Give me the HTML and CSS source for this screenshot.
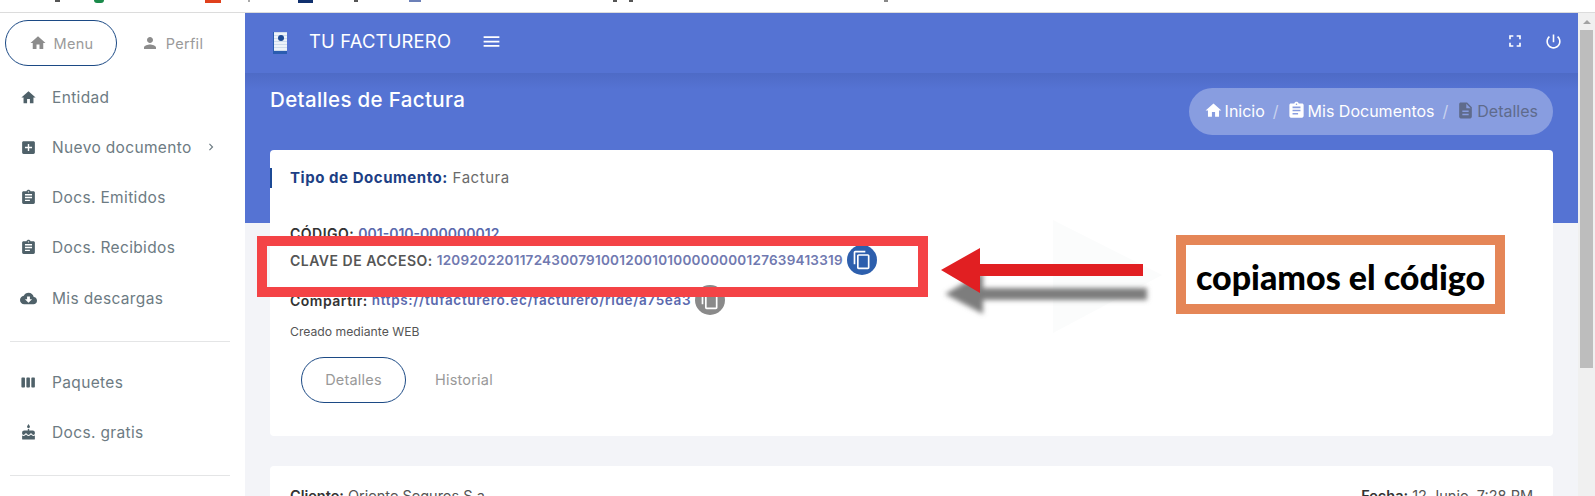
FILE: index.html
```html
<!DOCTYPE html>
<html lang="es">
<head>
  <meta charset="UTF-8">
  <title>Tu Facturero - Detalles de Factura</title>
  <meta name="viewport" content="width=device-width, initial-scale=1.0">
  <link rel="stylesheet" href="styles.css">
</head>
<body>

  <!-- iconos -->
  <svg class="sprite" aria-hidden="true">
    <symbol id="i-home" viewBox="0 0 24 24"><path d="M10 20v-6h4v6h5v-8h3L12 3 2 12h3v8z"/></symbol>
    <symbol id="i-person" viewBox="0 0 24 24"><path d="M12 12c2.21 0 4-1.79 4-4s-1.79-4-4-4-4 1.79-4 4 1.79 4 4 4zm0 2c-2.67 0-8 1.34-8 4v2h16v-2c0-2.66-5.33-4-8-4z"/></symbol>
    <symbol id="i-add" viewBox="0 0 24 24"><path d="M19 3H5c-1.11 0-2 .9-2 2v14c0 1.1.89 2 2 2h14c1.1 0 2-.9 2-2V5c0-1.1-.9-2-2-2zm-2 10h-4v4h-2v-4H7v-2h4V7h2v4h4v2z"/></symbol>
    <symbol id="i-clip" viewBox="0 0 24 24"><path d="M19 3h-4.18C14.4 1.84 13.3 1 12 1c-1.3 0-2.4.84-2.82 2H5c-1.1 0-2 .9-2 2v14c0 1.1.9 2 2 2h14c1.1 0 2-.9 2-2V5c0-1.1-.9-2-2-2zm-7 0c.55 0 1 .45 1 1s-.45 1-1 1-1-.45-1-1 .45-1 1-1zm2 14H7v-2h7v2zm3-4H7v-2h10v2zm0-4H7V7h10v2z"/></symbol>
    <symbol id="i-cloud" viewBox="0 0 24 24"><path d="M19.35 10.04C18.67 6.59 15.64 4 12 4 9.11 4 6.6 5.64 5.35 8.04 2.34 8.36 0 10.91 0 14c0 3.31 2.69 6 6 6h13c2.76 0 5-2.24 5-5 0-2.64-2.05-4.78-4.65-4.96zM17 13l-5 5-5-5h3V9h4v4h3z"/></symbol>
    <symbol id="i-week" viewBox="0 0 24 24"><path d="M6 5H3c-.55 0-1 .45-1 1v12c0 .55.45 1 1 1h3c.55 0 1-.45 1-1V6c0-.55-.45-1-1-1zm14 0h-3c-.55 0-1 .45-1 1v12c0 .55.45 1 1 1h3c.55 0 1-.45 1-1V6c0-.55-.45-1-1-1zm-7 0h-3c-.55 0-1 .45-1 1v12c0 .55.45 1 1 1h3c.55 0 1-.45 1-1V6c0-.55-.45-1-1-1z"/></symbol>
    <symbol id="i-cake" viewBox="0 0 24 24"><path d="M12 6c1.11 0 2-.9 2-2 0-.38-.1-.73-.29-1.03L12 0l-1.71 2.97c-.19.3-.29.65-.29 1.03 0 1.1.9 2 2 2zm4.6 9.99l-1.07-1.07-1.08 1.07c-1.3 1.3-3.58 1.31-4.89 0l-1.07-1.07-1.09 1.07C6.75 16.64 5.88 17 4.96 17c-.73 0-1.4-.23-1.96-.61V21c0 .55.45 1 1 1h16c.55 0 1-.45 1-1v-4.61c-.56.38-1.23.61-1.96.61-.92 0-1.79-.36-2.44-1.01zM18 9h-5V7h-2v2H6c-1.66 0-3 1.34-3 3v1.54c0 1.08.88 1.96 1.96 1.96.52 0 1.02-.2 1.38-.57l2.14-2.13 2.13 2.13c.74.74 2.03.74 2.77 0l2.14-2.13 2.13 2.13c.37.37.86.57 1.38.57 1.08 0 1.96-.88 1.96-1.96V12C21 10.34 19.66 9 18 9z"/></symbol>
    <symbol id="i-doc" viewBox="0 0 24 24"><path d="M14 2H6c-1.1 0-1.99.9-1.99 2L4 20c0 1.1.89 2 1.99 2H18c1.1 0 2-.9 2-2V8l-6-6zm2 16H8v-2h8v2zm0-4H8v-2h8v2zm-3-5V3.5L18.5 9H13z"/></symbol>
    <symbol id="i-full" viewBox="0 0 24 24"><path d="M7 14H5v5h5v-2H7v-3zm-2-4h2V7h3V5H5v5zm12 7h-3v2h5v-5h-2v3zM14 5v2h3v3h2V5h-5z"/></symbol>
    <symbol id="i-power" viewBox="0 0 24 24"><path d="M13 3h-2v10h2V3zm4.83 2.17l-1.42 1.42C17.99 7.86 19 9.81 19 12c0 3.87-3.13 7-7 7s-7-3.13-7-7c0-2.19 1.01-4.14 2.58-5.42L6.17 5.17C4.23 6.82 3 9.26 3 12c0 4.97 4.03 9 9 9s9-4.03 9-9c0-2.74-1.23-5.18-3.17-6.83z"/></symbol>
    <symbol id="i-copy" viewBox="0 0 24 24"><path d="M16 1H4c-1.1 0-2 .9-2 2v14h2V3h12V1zm3 4H8c-1.1 0-2 .9-2 2v14c0 1.1.9 2 2 2h11c1.1 0 2-.9 2-2V7c0-1.1-.9-2-2-2zm0 16H8V7h11v14z"/></symbol>
    <symbol id="i-menu" viewBox="0 0 24 24"><path d="M3 18h18v-2H3v2zm0-5h18v-2H3v2zm0-7v2h18V6H3z"/></symbol>
    <symbol id="i-chev" viewBox="0 0 24 24"><path d="M10 6 8.59 7.41 13.17 12l-4.58 4.59L10 18l6-6z"/></symbol>
  </svg>

  <!-- restos de la barra de marcadores, cortada -->
  <div class="bookmarks">
    <i class="mark m1"></i><i class="mark m2"></i><i class="mark m3"></i><i class="mark m4"></i>
    <i class="mark m5"></i><i class="mark m6"></i><i class="mark m7"></i><i class="mark m8"></i>
    <i class="mark m9"></i><i class="mark m10"></i>
  </div>

  <div class="app">
    <!-- ---------- Menu lateral ---------- -->
    <aside class="sidebar">
      <div class="side-tabs">
        <a class="side-tab active"><svg class="icon"><use href="#i-home"/></svg>Menu</a>
        <a class="side-tab"><svg class="icon"><use href="#i-person"/></svg>Perfil</a>
      </div>
      <nav class="side-nav">
        <a class="side-item"><svg class="icon"><use href="#i-home"/></svg>Entidad</a>
        <a class="side-item"><svg class="icon"><use href="#i-add"/></svg>Nuevo documento<svg class="chev"><use href="#i-chev"/></svg></a>
        <a class="side-item"><svg class="icon"><use href="#i-clip"/></svg>Docs. Emitidos</a>
        <a class="side-item"><svg class="icon"><use href="#i-clip"/></svg>Docs. Recibidos</a>
        <a class="side-item"><svg class="icon"><use href="#i-cloud"/></svg>Mis descargas</a>
        <hr class="side-line">
        <a class="side-item"><svg class="icon"><use href="#i-week"/></svg>Paquetes</a>
        <a class="side-item"><svg class="icon"><use href="#i-cake"/></svg>Docs. gratis</a>
        <hr class="side-line">
      </nav>
    </aside>

    <div class="main">
      <header class="topbar">
        <div class="logo"><span class="logo-dot"></span></div>
        <span class="brand">TU FACTURERO</span>
        <svg class="icon bar-burger"><use href="#i-menu"/></svg>
        <svg class="icon bar-full"><use href="#i-full"/></svg>
        <svg class="icon bar-power"><use href="#i-power"/></svg>
      </header>

      <div class="content">
        <div class="page-head">
          <h1>Detalles de Factura</h1>
          <div class="crumbs">
            <a><svg class="icon"><use href="#i-home"/></svg>Inicio</a>
            <span class="sep">/</span>
            <a><svg class="icon"><use href="#i-clip"/></svg>Mis Documentos</a>
            <span class="sep">/</span>
            <a class="current"><svg class="icon"><use href="#i-doc"/></svg>Detalles</a>
          </div>
        </div>

        <section class="card">
          <div class="card-title"><b>Tipo de Documento:</b> Factura</div>
          <div class="row row-code"><b>CÓDIGO:</b> <a>001-010-000000012</a></div>
          <div class="row row-key">
            <b>CLAVE DE ACCESO:</b> <a>1209202201172430079100120010100000000127639413319</a>
            <span class="copy-btn"><svg class="icon"><use href="#i-copy"/></svg></span>
          </div>
          <div class="row row-share">
            <b>Compartir:</b> <a>https://tufacturero.ec/facturero/ride/a75ea3</a>
            <span class="copy-btn grey"><svg class="icon"><use href="#i-copy"/></svg></span>
          </div>
          <div class="created">Creado mediante WEB</div>
          <div class="tabs">
            <a class="tab active">Detalles</a>
            <a class="tab">Historial</a>
          </div>
        </section>

        <section class="card second">
          <span><b>Cliente:</b> Oriente Seguros S.a.</span>
          <span><b>Fecha:</b> 12 Junio, 7:28 PM</span>
        </section>
      </div>
    </div>

    <div class="scrollbar">
      <span class="scroll-up"></span>
      <span class="scroll-thumb"></span>
    </div>
  </div>

  <!-- anotaciones puestas encima de la captura -->
  <div class="note-box"></div>
  <svg class="note-arrow" viewBox="0 0 240 120">
    <defs><filter id="blur" x="-10%" y="-40%" width="120%" height="180%"><feGaussianBlur stdDeviation="2.6"/></filter></defs>
    <polygon class="ghost" points="123,5 232,60 123,118"/>
    <polygon class="arrow-shadow" points="15,79 53,57 53,73 217,73 217,85 53,85 53,99" filter="url(#blur)"/>
    <polygon class="arrow-red" points="11,55 50,33 50,49 213,49 213,61 50,61 50,78"/>
  </svg>
  <div class="note-label">copiamos el código</div>

</body>
</html>
```

FILE: styles.css
```css
* { box-sizing: border-box; }

html, body {
  margin: 0;
  height: 496px;
  overflow: hidden;
}
body {
  position: relative;
  background: #fff;
  font-family: Inter, "Open Sans", sans-serif;
  color: #5f6368;
}
a { text-decoration: none; }
.sprite { display: none; }
.icon { fill: currentColor; flex: none; }

/* ---------- Barra de marcadores ---------- */
.bookmarks {
  display: flex;
  height: 13px;
  border-bottom: 1px solid #dcdcdc;
}
.mark { display: block; height: 2px; flex: none; background: #555; width: 5px; }
.m1 { margin-left: 55px; }
.m2 { margin-left: 34px; width: 10px; height: 3px; background: #1a8a4a; border-radius: 0 0 5px 5px; }
.m3 { margin-left: 101px; width: 16px; height: 3px; background: #e0401c; }
.m4 { margin-left: 27px; width: 2px; background: #aaa; }
.m5 { margin-left: 48px; width: 15px; height: 3px; background: #10306e; }
.m6 { margin-left: 41px; width: 4px; }
.m7 { margin-left: 51px; width: 12px; background: #6c80b8; }
.m8 { margin-left: 192px; width: 4px; }
.m9 { margin-left: 12px; width: 4px; }
.m10 { margin-left: 251px; width: 4px; background: #888; }

.app {
  display: flex;
  height: 483px;
}

/* ---------- Menu lateral ---------- */
.sidebar {
  width: 245px;
  flex: none;
  background: #fff;
}
.side-tabs {
  display: flex;
  align-items: center;
  padding: 7px 0 0 5px;
}
.side-tab {
  display: flex;
  align-items: center;
  justify-content: center;
  gap: 7px;
  width: 112px;
  height: 46px;
  font-size: 14.5px;
  letter-spacing: .3px;
  color: #9a9a9a;
  border-radius: 23px;
}
.side-tab .icon { width: 18px; height: 18px; color: #8c8c8c; }
.side-tab.active {
  border: 1px solid #1c4a85;
}
.side-tab + .side-tab { margin-left: 4px; width: 102px; }

.side-nav { margin-top: 6px; }
.side-item {
  display: flex;
  align-items: center;
  height: 50.25px;
  padding-left: 20px;
  font-size: 15.5px;
  letter-spacing: .35px;
  color: #6d7b83;
}
.side-item .icon {
  width: 17px;
  height: 17px;
  margin-right: 15px;
  color: #4f6169;
}
.chev { width: 14px; height: 14px; margin-left: 12px; fill: #6d7b83; }
.side-line {
  margin: 18px 15px 15px 10px;
  border: 0;
  border-top: 1px solid #e4e5e6;
}
.side-line:last-child { margin-top: 17px; }

/* ---------- Contenido ---------- */
.main {
  flex: 1;
  min-width: 0;
  background: #f3f4f8;
}
.topbar {
  display: flex;
  align-items: center;
  height: 60px;
  padding: 0 15px 4px 28px;
  background: #5573d3;
  color: #fff;
}
.logo {
  width: 14px;
  height: 22px;
  margin-top: 3px;
  background:
    linear-gradient(#2a5cb0, #2a5cb0) bottom / 100% 3px no-repeat,
    repeating-linear-gradient(#cfdcec 0 1px, #eef3f9 1px 3px);
  border-left: 1px solid #2a5cb0;
}
.logo-dot {
  display: block;
  width: 6px;
  height: 6px;
  margin: 3px auto 0;
  border-radius: 50%;
  background: #1c4a95;
}
.brand {
  margin-left: 22px;
  font-size: 18.4px;
  letter-spacing: .2px;
}
.bar-burger { width: 21px; height: 21px; margin-left: 30px; }
.bar-full { width: 20px; height: 20px; margin-left: auto; }
.bar-power { width: 19px; height: 19px; margin-left: 19px; }

.content {
  height: 423px;
  padding: 15px 25px 0;
  background:
    linear-gradient(#4e6bc6, #5573d3 16px, #5573d3 150px, transparent 150px);
}
.page-head {
  display: flex;
  justify-content: space-between;
  align-items: flex-start;
}
h1 {
  margin: 0;
  font-size: 20.5px;
  font-weight: 500;
  letter-spacing: .35px;
  line-height: 24px;
  color: #fff;
}
.crumbs {
  display: flex;
  align-items: center;
  gap: 8px;
  height: 47px;
  padding: 0 15px 2px;
  border-radius: 24px;
  background: rgba(255,255,255,.3);
  font-size: 16px;
  color: #fff;
}
.crumbs a { display: flex; align-items: center; gap: 2px; }
.crumbs .icon { width: 19px; height: 19px; }
.crumbs .sep { color: #c9d2ee; }
.crumbs .current { color: #5f6b8c; }

.card {
  margin-top: 15px;
  height: 286px;
  padding: 18px 20px 0;
  background: #fff;
  border-radius: 4px;
  font-size: 13.5px;
}
.card b { font-weight: 600; }
.card-title {
  margin-left: -20px;
  padding-left: 18px;
  height: 20px;
  line-height: 20px;
  border-left: 2px solid #1c4a95;
  font-size: 15px;
  letter-spacing: .55px;
  color: #6b6b6b;
}
.card-title b { color: #1d3f85; font-weight: 700; }

.row {
  display: flex;
  align-items: center;
  gap: 4px;
  height: 20px;
  white-space: nowrap;
}
.row b { color: #333; font-size: 14px; letter-spacing: .5px; }
.row a { color: #5a69ad; font-weight: 600; }
.row-code { margin-top: 35px; }
.row-code a { font-size: 14px; }
.row-key { margin-top: 7px; }
.row-key b { color: #555; }
.row-key a { color: #7079b0; letter-spacing: .25px; }
.row-share { margin-top: 20px; }
.row-share a { letter-spacing: .67px; }

.copy-btn {
  display: flex;
  align-items: center;
  justify-content: center;
  width: 30px;
  height: 30px;
  border-radius: 50%;
  background: #2d5fad;
  color: #fff;
}
.copy-btn .icon { width: 20px; height: 20px; }
.copy-btn.grey { background: #8a8a8a; }

.created {
  margin-top: 12px;
  height: 19px;
  line-height: 19px;
  font-size: 12.2px;
  color: #555;
}
.tabs {
  display: flex;
  align-items: center;
  gap: 29px;
  margin: 16px 0 0 11px;
}
.tab {
  padding-bottom: 2px;
  font-size: 14.5px;
  letter-spacing: .2px;
  color: #999;
}
.tab.active {
  display: flex;
  align-items: center;
  justify-content: center;
  width: 105px;
  height: 46px;
  border: 1px solid #1c4a85;
  border-radius: 23px;
}

.card.second {
  display: flex;
  justify-content: space-between;
  margin-top: 30px;
  height: 60px;
  padding-top: 21px;
  font-size: 14.5px;
  color: #555;
}
.second b { color: #333; }

/* ---------- Scroll ---------- */
.scrollbar {
  width: 17px;
  flex: none;
  background: #f0f0f0;
  padding: 0 2px;
}
.scroll-up {
  display: block;
  width: 0;
  margin: 7px auto 0;
  border: 4px solid transparent;
  border-top: 0;
  border-bottom: 4px solid #a3a3a3;
}
.scroll-thumb {
  display: block;
  height: 338px;
  margin-top: 6px;
  background: #bdbdbd;
}

/* ---------- Anotaciones ---------- */
.note-box {
  position: absolute;
  left: 257px;
  top: 236px;
  width: 671px;
  height: 61px;
  border: 10px solid #f44346;
}
.note-arrow {
  position: absolute;
  left: 930px;
  top: 215px;
  width: 240px;
  height: 120px;
}
.ghost { fill: #fbfcfc; }
.arrow-shadow { fill: #7d7d7d; }
.arrow-red { fill: #e11f22; }
.note-label {
  position: absolute;
  left: 1176px;
  top: 235px;
  width: 329px;
  height: 79px;
  padding-top: 4px;
  border: 10px solid #e58657;
  background: #fff;
  display: flex;
  align-items: center;
  justify-content: center;
  font-family: Lato, sans-serif;
  font-weight: 900;
  font-size: 34px;
  color: #000;
  white-space: nowrap;
}
```
